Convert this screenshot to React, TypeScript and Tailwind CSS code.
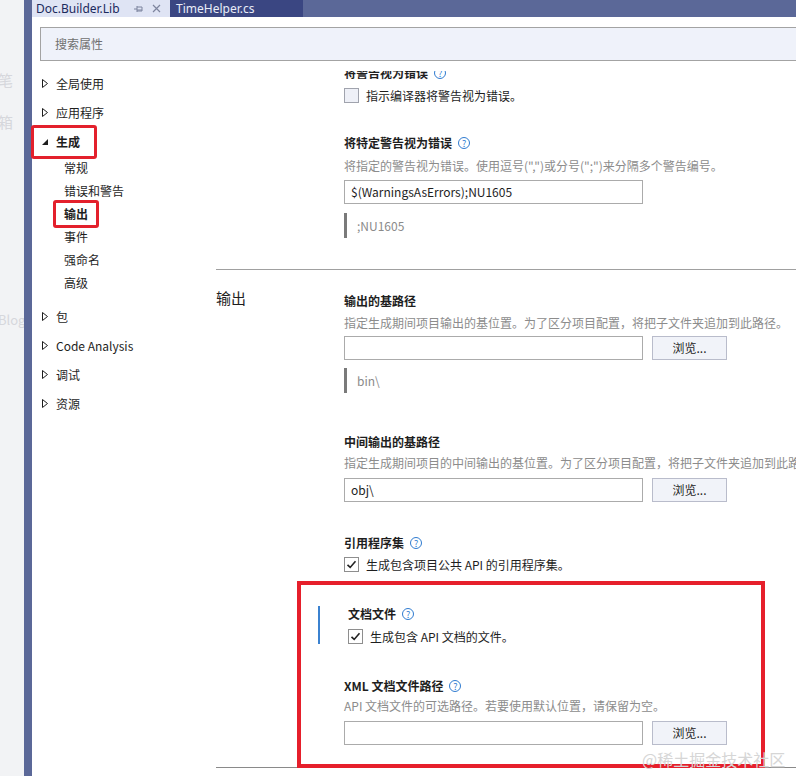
import React from 'react';

const FONT = "font-['Microsoft_YaHei','Noto_Sans_CJK_SC','Noto_Sans',sans-serif]";

function Help() {
  return (
    <span className="ml-[6px] inline-flex h-[12px] w-[12px] items-center justify-center rounded-full border border-[#2f7bd0] text-[9px] font-normal leading-none text-[#2f7bd0]">
      ?
    </span>
  );
}

function Heading({ text, help = false, className = '' }: { text: string; help?: boolean; className?: string }) {
  return (
    <div className={`flex h-[16px] items-center text-[12px] font-bold text-[#1e1e1e] ${className}`}>
      {text}
      {help && <Help />}
    </div>
  );
}

function Desc({ text, className = '' }: { text: string; className?: string }) {
  return <div className={`h-[16px] whitespace-nowrap text-[12px] leading-[16px] text-[#8c8c8c] ${className}`}>{text}</div>;
}

function Field({ value = '', browse = false, className = '' }: { value?: string; browse?: boolean; className?: string }) {
  return (
    <div className={`flex gap-[9px] ${className}`}>
      <div className="h-[24px] w-[299px] border border-[#ababab] bg-white px-[6px] text-[12px] leading-[22px] text-[#1e1e1e]">{value}</div>
      {browse && (
        <div className="h-[24px] w-[75px] border border-[#b9bccb] bg-[#f1f3f9] text-center text-[12px] leading-[22px] text-[#1e1e1e]">浏览...</div>
      )}
    </div>
  );
}

function Hint({ text, className = '' }: { text: string; className?: string }) {
  return (
    <div className={`flex h-[25px] items-center border-l-[3px] border-[#7a7a7a] pl-[10px] text-[12px] text-[#8a8a8a] ${className}`}>{text}</div>
  );
}

function Check({ checked, label, className = '' }: { checked: boolean; label: string; className?: string }) {
  return (
    <div className={`flex h-[15px] items-center gap-[7px] ${className}`}>
      <span
        className={`flex h-[15px] w-[15px] items-center justify-center border ${checked ? 'border-[#8e8e8e] bg-white' : 'border-[#a0a3ad] bg-[#eef0f7]'}`}
      >
        {checked && (
          <svg width="11" height="11" viewBox="0 0 11 11">
            <path d="M1.5 5.8L4.2 8.4L9.5 2.2" fill="none" stroke="#222" strokeWidth="1.6" />
          </svg>
        )}
      </span>
      <span className="text-[12px] text-[#1e1e1e]">{label}</span>
    </div>
  );
}

function Tri({ open }: { open?: boolean }) {
  return open ? (
    <svg width="6" height="6" viewBox="0 0 6 6">
      <path d="M6 0V6H0Z" fill="#1e1e1e" />
    </svg>
  ) : (
    <svg width="6" height="9" viewBox="0 0 6 9">
      <path d="M0.5 0.5L5.5 4.5L0.5 8.5Z" fill="none" stroke="#1e1e1e" strokeWidth="1" />
    </svg>
  );
}

function NavTop({ text, open, children }: { text: string; open?: boolean; children?: React.ReactNode }) {
  return (
    <div className="relative flex h-[29px] items-center pl-[10px] text-[12px] text-[#1e1e1e]">
      <span className="flex w-[14px] items-center">
        <Tri open={open} />
      </span>
      <span className={open ? 'font-bold' : ''}>{text}</span>
      {children}
    </div>
  );
}

function NavSub({ text, bold, children }: { text: string; bold?: boolean; children?: React.ReactNode }) {
  return (
    <div className={`relative flex h-[23px] items-center pl-[32px] text-[12px] text-[#1e1e1e] ${bold ? 'font-bold' : ''}`}>
      {text}
      {children}
    </div>
  );
}

export default function App() {
  return (
    <div className={`relative flex h-[776px] w-[796px] overflow-hidden bg-white ${FONT}`}>
      {/* page behind the window */}
      <div className="flex w-[24px] shrink-0 flex-col overflow-hidden bg-[#f2f3f5] text-[15px] leading-[16px] text-[#d6d7dc]">
        <span className="ml-[-2px] mt-[72px]">笔</span>
        <span className="ml-[-2px] mt-[26px]">箱</span>
        <span className="ml-[-2px] mt-[182px] whitespace-nowrap text-[13px]">Blog</span>
      </div>

      <div className="flex flex-1 flex-col bg-[#5b6898] pl-[8px]">
        {/* tabs */}
        <div className="flex h-[17px] shrink-0 text-[12px] leading-[17px]">
          <div className="flex w-[138px] items-center bg-[#dfe4f4] pl-[4px] font-['Noto_Sans',sans-serif] text-[#1b2a5c]">
            <span>Doc.Builder.Lib</span>
            <svg className="ml-[14px]" width="9" height="8" viewBox="0 0 9 8">
              <path d="M0 4H3M3 1V7M3 2H8V6H3M3 5H8" fill="none" stroke="#7d849e" strokeWidth="1" />
            </svg>
            <svg className="ml-[9px]" width="9" height="9" viewBox="0 0 9 9">
              <path d="M1 1L8 8M8 1L1 8" stroke="#7d849e" strokeWidth="1.2" />
            </svg>
          </div>
          <div className="w-[133px] bg-[#3a4682] pl-[6px] font-['Noto_Sans',sans-serif] text-[#e8ecf8]">TimeHelper.cs</div>
        </div>

        {/* tool window */}
        <div className="flex min-h-0 flex-1 flex-col bg-white">
          <div className="-mr-[20px] ml-[8px] mt-[10px] flex h-[34px] shrink-0 items-center border border-[#a3a3a3] bg-[#eff2fa] pl-[14px] text-[12px] text-[#707070]">
            搜索属性
          </div>

          <div className="flex min-h-0 flex-1">
            {/* navigation */}
            <div className="w-[184px] shrink-0 pt-[8px]">
              <NavTop text="全局使用" />
              <NavTop text="应用程序" />
              <NavTop text="生成" open>
                <div className="absolute left-[-1px] top-[-2px] h-[34px] w-[66px] rounded-[3px] border-[3px] border-[#e3202c]" />
              </NavTop>
              <div className="mb-[8px]">
                <NavSub text="常规" />
                <NavSub text="错误和警告" />
                <NavSub text="输出" bold>
                  <div className="absolute left-[21px] top-[-2px] h-[28px] w-[46px] rounded-[3px] border-[3px] border-[#e3202c]" />
                </NavSub>
                <NavSub text="事件" />
                <NavSub text="强命名" />
                <NavSub text="高级" />
              </div>
              <NavTop text="包" />
              <NavTop text="Code Analysis" />
              <NavTop text="调试" />
              <NavTop text="资源" />
            </div>

            {/* properties, scrolled so the first heading is cut at the top */}
            <div className="min-w-0 flex-1 pt-[10px]">
              <div className="h-full overflow-hidden">
                <div className="-mt-[6px] flex flex-col">
                  <div className="flex">
                    <div className="w-[128px] shrink-0" />
                    <div className="flex flex-col">
                      <Heading text="将警告视为错误" help />
                      <Check checked={false} label="指示编译器将警告视为错误。" className="mt-[7px]" />
                      <Heading text="将特定警告视为错误" help className="mt-[32px]" />
                      <Desc text={'将指定的警告视为错误。使用逗号(",")或分号(";")来分隔多个警告编号。'} className="mt-[7px]" />
                      <Field value="$(WarningsAsErrors);NU1605" className="mt-[6px]" />
                      <Hint text=";NU1605" className="mt-[9px]" />
                    </div>
                  </div>

                  <div className="mt-[31px] h-px bg-[#a0a0a0]" />

                  <div className="flex pt-[23px]">
                    <div className="-mt-[3px] w-[128px] shrink-0 text-[15px] leading-[16px] text-[#1e1e1e]">输出</div>
                    <div className="flex flex-col">
                      <Heading text="输出的基路径" />
                      <Desc text="指定生成期间项目输出的基位置。为了区分项目配置，将把子文件夹追加到此路径。" className="mt-[6px]" />
                      <Field browse className="mt-[5px]" />
                      <Hint text="bin\" className="mt-[8px]" />

                      <Heading text="中间输出的基路径" className="mt-[41px]" />
                      <Desc text="指定生成期间项目的中间输出的基位置。为了区分项目配置，将把子文件夹追加到此路径。" className="mt-[5px]" />
                      <Field value="obj\" browse className="mt-[7px]" />

                      <Heading text="引用程序集" help className="mt-[33px]" />
                      <Check checked label="生成包含项目公共 API 的引用程序集。" className="mt-[6px]" />

                      <div className="relative mt-[34px]">
                        <div className="absolute left-[-47px] top-[-25px] h-[187px] w-[468px] border-[4px] border-[#e61f2b]" />
                        <div className="relative pl-[4px]">
                          <div className="absolute left-[-26px] top-0 h-[38px] w-[2px] bg-[#3b82d0]" />
                          <Heading text="文档文件" help />
                          <Check checked label="生成包含 API 文档的文件。" className="mt-[7px]" />
                        </div>
                        <Heading text="XML 文档文件路径" help className="mt-[34px]" />
                        <Desc text="API 文档文件的可选路径。若要使用默认位置，请保留为空。" className="mt-[4px]" />
                        <Field browse className="mt-[7px]" />
                      </div>
                    </div>
                  </div>

                  <div className="mt-[22px] h-px bg-[#8a8a8a]" />
                </div>
              </div>
            </div>
          </div>
        </div>
      </div>

      <div className="absolute left-[642px] top-[749px] whitespace-nowrap text-[16px] leading-[20px] text-[#d6d6d6]">@稀土掘金技术社区</div>
    </div>
  );
}
